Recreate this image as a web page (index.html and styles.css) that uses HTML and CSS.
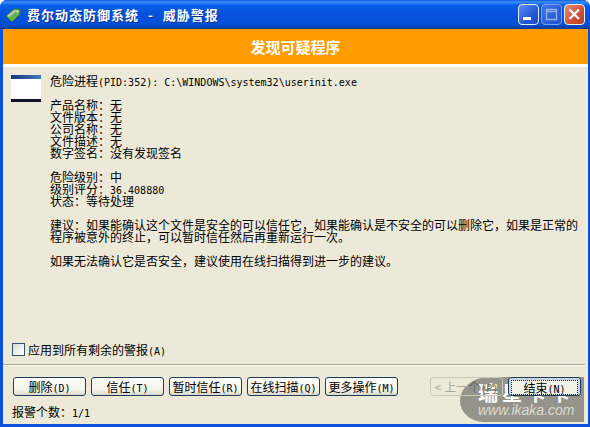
FILE: index.html
```html
<!DOCTYPE html>
<html lang="zh-CN">
<head>
    <meta charset="UTF-8">
    <title>费尔动态防御系统 - 威胁警报</title>
    <link rel="stylesheet" href="styles.css">
</head>
<body>
    <div class="window">
        <div class="titlebar">
            <svg class="app-icon" width="16" height="16" viewBox="0 0 16 16">
                <path d="M1 9 L9 2 L15 2 L15 7 L7 15 Z" fill="#5fb548" stroke="#2f7a35" stroke-width="1"/>
                <path d="M2 9 L9 3 L12 3 L5 10 Z" fill="#b9c4c4"/>
                <circle cx="12.5" cy="4.5" r="1" fill="#fff"/>
            </svg>
            <span class="title-text">费尔动态防御系统 <span class="title-dash">-</span> 威胁警报</span>
            <div class="win-buttons">
                <div class="win-btn">
                    <svg width="21" height="21" viewBox="0 0 21 21"><rect x="5" y="13" width="8" height="3" fill="#fff"/></svg>
                </div>
                <div class="win-btn win-off">
                    <svg width="21" height="21" viewBox="0 0 21 21"><path d="M5.5 5.5 H15.5 V15.5 H5.5 Z M5.5 7.5 H15.5" fill="none" stroke="#8fb0ea" stroke-width="1.4"/></svg>
                </div>
                <div class="win-btn win-close">
                    <svg width="21" height="21" viewBox="0 0 21 21"><path d="M5.5 5.5 L15 15 M15 5.5 L5.5 15" stroke="#fff" stroke-width="2.2"/></svg>
                </div>
            </div>
        </div>
        <div class="client">
            <div class="banner">发现可疑程序</div>
            <div class="content">
                <div class="proc-icon"><div class="proc-icon-bar"></div></div>
                <div class="report">
                    <p>危险进程<span class="lat">(PID:352): C:\WINDOWS\system32\userinit.exe</span></p>
                    <p>产品名称：无<br>文件版本：无<br>公司名称：无<br>文件描述：无<br>数字签名：没有发现签名</p>
                    <p>危险级别：中<br>级别评分：<span class="lat">36.408880</span><br>状态：等待处理</p>
                    <p>建议：如果能确认这个文件是安全的可以信任它，如果能确认是不安全的可以删除它，如果是正常的<br>程序被意外的终止，可以暂时信任然后再重新运行一次。</p>
                    <p>如果无法确认它是否安全，建议使用在线扫描得到进一步的建议。</p>
                </div>
            </div>
            <label class="apply-all"><span class="checkbox"></span><span>应用到所有剩余的警报<span class="lat">(A)</span></span></label>
            <div class="separator"></div>
            <div class="actions">
                <div class="btn-group">
                    <div class="btn">删除<span class="lat">(D)</span></div>
                    <div class="btn">信任<span class="lat">(T)</span></div>
                    <div class="btn">暂时信任<span class="lat">(R)</span></div>
                    <div class="btn">在线扫描<span class="lat">(Q)</span></div>
                    <div class="btn">更多操作<span class="lat">(M)</span></div>
                </div>
                <div class="btn-group">
                    <div class="btn btn-off">&lt; 上一<span class="btn-off-over">个<span class="lat">(P)</span></span></div>
                    <div class="btn btn-default"><div class="btn-focus">结束<span class="lat">(N)</span></div></div>
                </div>
            </div>
            <div class="status">报警个数：<span class="lat">1/1</span></div>
        </div>
        <div class="watermark">
            <div class="wm-name">瑞星卡卡</div>
            <div class="wm-url">www.ikaka.com</div>
        </div>
    </div>
</body>
</html>
```

FILE: styles.css
```css
html, body {
    margin: 0;
    padding: 0;
}
body {
    width: 590px;
    height: 427px;
    overflow: hidden;
    font-family: "Noto Sans CJK SC", sans-serif;
    font-size: 12px;
    color: #000;
}
.window {
    position: relative;
    display: flex;
    flex-direction: column;
    width: 590px;
    height: 427px;
    box-sizing: border-box;
    background: #0a50dc;
    padding: 0 2px 3px 3px;
    border-radius: 7px 7px 0 0;
}
.titlebar {
    display: flex;
    align-items: center;
    height: 29px;
    flex-shrink: 0;
    margin: 0 -2px 0 -3px;
    padding: 0 5px 0 5px;
    border-radius: 7px 7px 0 0;
    background: linear-gradient(to bottom, #0a5ae0 0, #3c8ff5 2px, #0a5fe8 5px, #0452dc 14px, #0350d8 24px, #0a3fa8 28px, #1c3a80 29px);
    color: #fff;
}
.app-icon {
    flex-shrink: 0;
    margin-right: 6px;
}
.title-text {
    flex: 1;
    font-size: 13px;
    font-weight: bold;
    text-shadow: 1px 1px 0 #0a2f90;
    white-space: pre;
    letter-spacing: 1px;
}
.title-dash {
    margin: 0 5px;
}
.win-buttons {
    display: flex;
    gap: 2px;
    margin-top: -1px;
}
.win-btn {
    width: 21px;
    height: 21px;
    box-sizing: border-box;
    border: 1px solid #e8eefc;
    border-radius: 4px;
    background: linear-gradient(135deg, #5c8cf0, #2458d8 60%, #1c48c8);
    display: flex;
    align-items: center;
    justify-content: center;
}
.win-btn svg {
    flex-shrink: 0;
}
.win-off {
    border-color: #7f9fe8;
    background: linear-gradient(135deg, #4476e4, #2c5cd8 60%, #2452d0);
}
.win-close {
    background: linear-gradient(135deg, #e8907a, #d2533a 55%, #b83a22);
}
.client {
    flex: 1;
    display: flex;
    flex-direction: column;
    min-height: 0;
    background: #ece9d8;
}
.banner {
    height: 35px;
    flex-shrink: 0;
    line-height: 35px;
    background: #ff9c00;
    border-bottom: 3px solid #fff;
    color: #fff;
    font-size: 15px;
    font-weight: bold;
    text-align: center;
}
.content {
    display: flex;
    flex: 1;
    min-height: 0;
    padding: 8px 8px 0 8px;
}
.proc-icon {
    width: 30px;
    height: 27px;
    flex-shrink: 0;
    box-sizing: border-box;
    background: #fff;
    border-bottom: 3px solid #10102c;
    margin-right: 9px;
}
.proc-icon-bar {
    height: 4px;
    background: linear-gradient(to right, #123a7a, #3f7cc0);
}
.report {
    flex: 1;
    line-height: 12px;
}
.report p {
    margin: 0 0 12px 0;
    white-space: nowrap;
}
.lat {
    font-family: "DejaVu Sans Mono", "Liberation Mono", monospace;
    font-size: 10px;
    line-height: 0;
    white-space: pre;
}
.apply-all {
    display: flex;
    align-items: center;
    height: 14px;
    flex-shrink: 0;
    padding-left: 9px;
    margin-bottom: 8px;
    font-size: 12px;
}
.checkbox {
    width: 11px;
    height: 11px;
    border: 1px solid #34506e;
    background: linear-gradient(135deg, #dcdcd4, #fff);
    margin-right: 3px;
}
.separator {
    height: 1px;
    flex-shrink: 0;
    margin: 0 3px 0 0;
    background: #aca899;
    border-bottom: 1px solid #fff;
}
.actions {
    display: flex;
    justify-content: space-between;
    flex-shrink: 0;
    padding: 11px 7px 0 10px;
}
.btn-group {
    display: flex;
    gap: 5px;
}
.btn {
    position: relative;
    z-index: 1;
    width: 73px;
    height: 19px;
    box-sizing: border-box;
    border: 1px solid #1f3c5c;
    border-radius: 3px;
    background: linear-gradient(to bottom, #fff, #f4f3ea 70%, #dcd8c8);
    font-size: 12px;
    line-height: 17px;
    text-align: center;
    white-space: nowrap;
    overflow: hidden;
}
.btn-off {
    border-color: #cac8bb;
    background: none;
    color: #aca899;
}
.btn-off-over {
    color: #66665a;
}
.btn-default {
    padding: 2px;
    background: #c8d4e4;
}
.btn-focus {
    height: 13px;
    line-height: 13px;
    border: 1px dotted #222;
    background: #f2f1e8;
}
.status {
    flex-shrink: 0;
    padding: 9px 0 5px 9px;
    line-height: 14px;
}
.watermark {
    position: absolute;
    left: 460px;
    top: 377px;
    width: 124px;
    height: 45px;
    box-sizing: border-box;
    padding-left: 18px;
    border-radius: 30px 0 0 24px / 24px 0 0 22px;
    background: #94948a;
    color: #fff;
    overflow: hidden;
}
.wm-name {
    height: 26px;
    padding-top: 6px;
    box-sizing: border-box;
    font-size: 20px;
    font-weight: bold;
    line-height: 20px;
    letter-spacing: 4px;
    white-space: nowrap;
}
.wm-url {
    font-family: "Liberation Sans", sans-serif;
    font-size: 14px;
    font-style: italic;
    line-height: 15px;
    white-space: nowrap;
    color: #dcdcd4;
}
```
